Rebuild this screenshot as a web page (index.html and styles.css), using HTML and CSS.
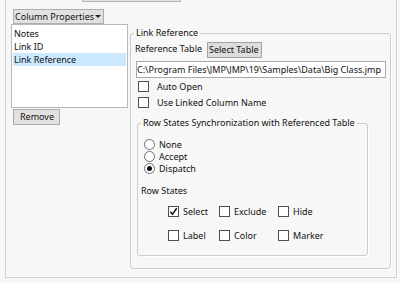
FILE: index.html
```html
<!DOCTYPE html>
<html lang="en">
<head>
    <meta charset="UTF-8">
    <title>Column Properties</title>
    <link rel="stylesheet" href="styles.css">
</head>
<body>
    <div class="panel">
        <div class="stub"></div>
        <div class="main">
            <div class="left">
                <div class="btn menu-btn">Column Properties <span class="arrow"></span></div>
                <div class="listbox">
                    <div class="item">Notes</div>
                    <div class="item">Link ID</div>
                    <div class="item selected">Link Reference</div>
                </div>
                <div class="btn remove-btn">Remove</div>
            </div>

            <div class="group link-group">
                <div class="group-title">Link Reference</div>
                <div class="ref-row">
                    <span class="ref-label">Reference Table</span>
                    <div class="btn select-btn">Select Table</div>
                </div>
                <div class="path-box">C:\Program Files\JMP\JMP\19\Samples\Data\Big Class.jmp</div>
                <div class="check-row"><span class="box"></span>Auto Open</div>
                <div class="check-row"><span class="box"></span>Use Linked Column Name</div>

                <div class="group sync-group">
                    <div class="group-title">Row States Synchronization with Referenced Table</div>
                    <div class="radios">
                        <div class="radio-row"><span class="circle"></span>None</div>
                        <div class="radio-row"><span class="circle"></span>Accept</div>
                        <div class="radio-row"><span class="circle on"></span>Dispatch</div>
                    </div>
                    <div class="states-label">Row States</div>
                    <div class="states">
                        <div class="check-row"><span class="box checked"><svg width="9" height="9" viewBox="0 0 9 9"><path d="M1.3 4.6 L3.5 7.3 L7.7 1.2" fill="none" stroke="#111" stroke-width="1.5"/></svg></span>Select</div>
                        <div class="check-row"><span class="box"></span>Exclude</div>
                        <div class="check-row"><span class="box"></span>Hide</div>
                        <div class="check-row"><span class="box"></span>Label</div>
                        <div class="check-row"><span class="box"></span>Color</div>
                        <div class="check-row"><span class="box"></span>Marker</div>
                    </div>
                </div>
            </div>
        </div>
    </div>
</body>
</html>
```

FILE: styles.css
```css
body {
    font-family: "Noto Sans", "Open Sans", sans-serif;
    font-size: 9px;
    color: #111111;
    background-color: #f7f7f7;
    margin: 0;
}
.panel {
    box-sizing: border-box;
    margin-left: 5px;
    width: 392px;
    height: 278px;
    border: 1px solid #cfcfcf;
    border-top: none;
    box-shadow: 1px 1px 0 #ffffff;
}
.stub {
    box-sizing: border-box;
    margin-left: 76px;
    width: 99px;
    height: 2px;
    border: 1px solid #b5b5b5;
    border-top: none;
    background-color: #e3e3e3;
}
.main {
    display: flex;
    align-items: flex-start;
}
.left {
    margin-left: 5px;
    width: 117px;
}
.btn {
    box-sizing: border-box;
    height: 16px;
    line-height: 14px;
    border: 1px solid #adadad;
    background-color: #e1e1e1;
    white-space: nowrap;
}
.menu-btn {
    display: flex;
    align-items: center;
    margin: 7px 0 0 2px;
    width: 91px;
    height: 15px;
    padding-left: 1px;
}
.arrow {
    margin: 0 2px 0 auto;
    border-left: 3px solid transparent;
    border-right: 3px solid transparent;
    border-top: 3px solid #222;
}
.listbox {
    box-sizing: border-box;
    height: 84px;
    padding: 2px 1px 0;
    border: 1px solid #b9b9b9;
    background-color: #ffffff;
}
.item {
    height: 13px;
    line-height: 13px;
    padding-left: 1px;
}
.item.selected {
    background-color: #cce8ff;
}
.remove-btn {
    margin: 1px 0 0 2px;
    width: 47px;
    padding-left: 6px;
}
.group {
    box-sizing: border-box;
    border: 1px solid #cccccc;
    border-radius: 3px;
    box-shadow: 1px 1px 0 #ffffff;
}
.group-title {
    width: fit-content;
    height: 14px;
    line-height: 14px;
    margin: -8px 0 0 3px;
    padding: 0 2px;
    background-color: #f7f7f7;
}
.link-group {
    margin: 31px 0 0 2px;
    width: 261px;
    height: 236px;
}
.ref-row {
    display: flex;
    align-items: flex-start;
    margin-top: 2px;
}
.ref-label {
    width: 72px;
    padding-left: 4px;
    line-height: 13px;
}
.select-btn {
    width: 55px;
    padding-left: 1px;
    border-color: #a3a3a3;
    background-color: #dddddd;
}
.path-box {
    box-sizing: border-box;
    margin: 3px 0 0 5px;
    width: 250px;
    height: 17px;
    line-height: 15px;
    padding-left: 0;
    border: 1px solid #a9a9a9;
    background-color: #ffffff;
    white-space: nowrap;
    overflow: hidden;
}
.check-row {
    display: flex;
    align-items: center;
    height: 16px;
    white-space: nowrap;
}
.link-group > .check-row {
    margin-left: 7px;
}
.link-group > .check-row:nth-of-type(1) {
    margin-top: 3px;
}
.box {
    box-sizing: border-box;
    display: flex;
    align-items: center;
    justify-content: center;
    flex: none;
    width: 11px;
    height: 11px;
    margin-right: 8px;
    border: 1px solid #4f4f4f;
    background-color: #ffffff;
}
.sync-group {
    margin: 13px 0 0 6px;
    width: 231px;
    height: 133px;
}
.radios {
    margin: 8px 0 0 6px;
}
.radio-row {
    display: flex;
    align-items: center;
    height: 12px;
}
.circle {
    box-sizing: border-box;
    display: flex;
    align-items: center;
    justify-content: center;
    width: 11px;
    height: 11px;
    margin-right: 4px;
    border: 1px solid #6f6f6f;
    border-radius: 50%;
    background-color: #ffffff;
}
.circle.on::after {
    content: "";
    width: 5px;
    height: 5px;
    border-radius: 50%;
    background-color: #111;
}
.states-label {
    margin: 10px 0 0 3px;
    height: 14px;
    line-height: 14px;
}
.states {
    display: grid;
    grid-template-columns: 51px 59px auto;
    row-gap: 8px;
    margin: 5px 0 0 30px;
}
.states .box {
    margin-right: 4px;
}
```
